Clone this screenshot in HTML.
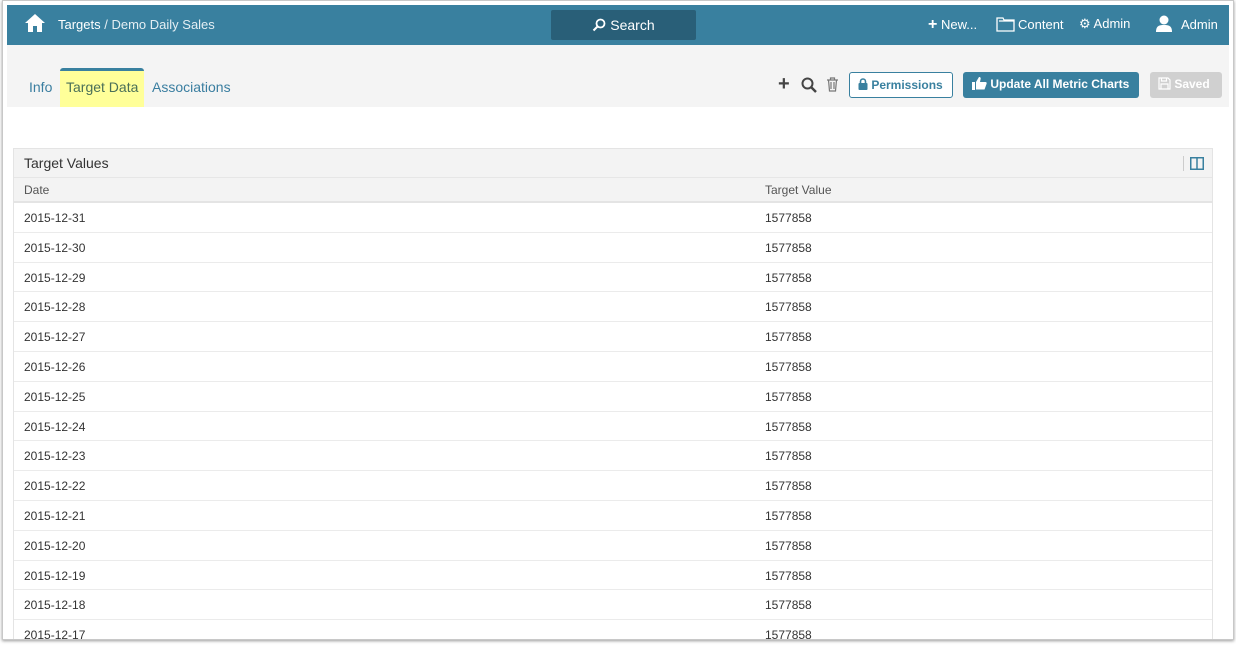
<!DOCTYPE html>
<html><head><style>
*{box-sizing:border-box;margin:0;padding:0}
body{width:1236px;height:646px;background:#fff;font-family:"Liberation Sans",sans-serif;position:relative;overflow:hidden}
.frame{position:absolute;left:2px;top:0px;width:1232px;height:640px;border:1px solid #c8c8c8;box-shadow:0 1px 3px rgba(0,0,0,.4);overflow:hidden;background:#fff}
.hdr{position:absolute;left:4px;top:4px;width:1222px;height:40px;background:#39809f;color:#fff;font-size:13px}
.hdr span{position:absolute;top:13px}
.search{position:absolute;left:544px;top:5px;width:145px;height:30px;background:#295f78;border-radius:2px;color:#fff;font-size:14px;text-align:center;line-height:30px}
.sub{position:absolute;left:4px;top:44px;width:1222px;height:62px;background:#f4f4f4}
.tab{position:absolute;top:78px;font-size:14px;color:#3a7ea0}
.btn{position:absolute;top:71px;height:26px;border-radius:3px;font-size:12px;font-weight:bold;line-height:24px}
.tbl{position:absolute;left:10px;top:147px;width:1200px;height:500px;border:1px solid #e4e4e4;border-bottom:none}
.th1{height:29px;background:#f3f3f3;border-bottom:1px solid #e6e6e6;font-size:14px;color:#333;padding:6px 10px}
.th2{height:25px;background:#f3f3f3;border-bottom:2px solid #e4e4e4;font-size:12px;color:#555;position:relative}
.row{height:29.8px;border-bottom:1px solid #ebebeb;font-size:12px;color:#333;position:relative}
.c1{position:absolute;left:10px;top:8px}.c2{position:absolute;left:751px;top:8px}
.th2 .c1,.th2 .c2{top:5px}
</style></head><body>
<div class="frame">
<div class="hdr">
<svg style="position:absolute;left:17px;top:8px" width="22" height="20" viewBox="0 0 22 20"><path d="M11 1L1 10h3v9h5v-6h4v6h5v-9h3z" fill="#fff"/></svg>
<span style="left:51px;top:12px">Targets <span style="position:static;color:#e4eef3">/ Demo Daily Sales</span></span>
<div class="search"><svg width="14" height="14" viewBox="0 0 14 14" style="vertical-align:-2px"><circle cx="8.5" cy="5.5" r="4" stroke="#fff" stroke-width="1.8" fill="none"/><path d="M5.5 8.5L1.5 12.5" stroke="#fff" stroke-width="2"/></svg> Search</div>
<span style="left:921px;top:12px"><b style="font-size:16px;line-height:10px">+</b> New...</span>
<svg style="position:absolute;left:989px;top:12px" width="19" height="15" viewBox="0 0 19 15"><path d="M1 1h6l1 2h10v11H1z M3 4h15" stroke="#fff" stroke-width="1.3" fill="none"/></svg>
<span style="left:1011px;top:12px">Content</span>
<span style="left:1072px;top:11px">⚙ Admin</span>
<svg style="position:absolute;left:1149px;top:10px" width="16" height="17" viewBox="0 0 16 17"><circle cx="8" cy="5" r="4.5" fill="#fff"/><path d="M0 17c0-6 3-7 8-7s8 1 8 7z" fill="#fff"/></svg>
<span style="left:1174px;top:12px">Admin</span>
</div>
<div class="sub"></div>
<div style="position:absolute;left:57px;top:67px;width:84px;height:39px;background:#ffff99;border-top:3px solid #39809f;border-radius:3px 3px 0 0"></div>
<div class="tab" style="left:26px">Info</div>
<div class="tab" style="left:63px;color:#4a6f58">Target Data</div>
<div class="tab" style="left:149px">Associations</div>
<div style="position:absolute;left:775px;top:74px;font-size:20px;font-weight:bold;color:#444;line-height:18px">+</div>
<svg style="position:absolute;left:798px;top:76px" width="16" height="16" viewBox="0 0 16 16"><circle cx="6.5" cy="6.5" r="5" stroke="#444" stroke-width="2" fill="none"/><path d="M10 10l5 5" stroke="#444" stroke-width="2.5"/></svg>
<svg style="position:absolute;left:823px;top:76px" width="13" height="15" viewBox="0 0 13 15"><path d="M1 3h11M4.5 3V1h4v2M2.5 3l1 11h6l1-11M5 5v7M8 5v7" stroke="#777" stroke-width="1.2" fill="none"/></svg>
<div class="btn" style="left:846px;width:104px;border:1px solid #39809f;color:#39809f;background:#fff;padding-left:8px"><svg width="10" height="12" viewBox="0 0 10 12" style="vertical-align:-1px"><path d="M2.5 5V3.5a2.5 2.5 0 0 1 5 0V5" stroke="#39809f" stroke-width="1.6" fill="none"/><rect x="0.5" y="5" width="9" height="7" rx="1" fill="#39809f"/></svg> Permissions</div>
<div class="btn" style="left:960px;width:176px;background:#39809f;color:#fff;padding-left:9px"><svg width="15" height="14" viewBox="0 0 15 14" style="vertical-align:-2px"><rect x="0" y="6" width="3" height="8" fill="#fff"/><path d="M4 6l3-5c1.5 0 2 1 1.5 2.5L8 6h5.5c1 0 1.5 1 1 2l-2 5.5H4z" fill="#fff"/></svg> Update All Metric Charts</div>
<div class="btn" style="left:1147px;width:72px;background:#d0d0d0;color:#fff;padding-left:8px"><svg width="13" height="13" viewBox="0 0 13 13" style="vertical-align:-2px"><path d="M1 1h9l2 2v9H1z M3.5 1v3h5V1 M3 7h7v5H3z" stroke="#fff" stroke-width="1.2" fill="none"/></svg> Saved</div>
<div class="tbl">
<div class="th1">Target Values
<span style="position:absolute;right:28px;top:7px;width:1px;height:15px;background:#ccc"></span>
<svg style="position:absolute;right:8px;top:8px" width="14" height="13" viewBox="0 0 14 13"><rect x=".75" y=".75" width="12.5" height="11.5" fill="none" stroke="#39809f" stroke-width="1.5"/><path d="M7 1v11" stroke="#39809f" stroke-width="1.5"/></svg></div>
<div class="th2"><span class="c1">Date</span><span class="c2">Target Value</span></div>
<div class="row"><span class="c1">2015-12-31</span><span class="c2">1577858</span></div>
<div class="row"><span class="c1">2015-12-30</span><span class="c2">1577858</span></div>
<div class="row"><span class="c1">2015-12-29</span><span class="c2">1577858</span></div>
<div class="row"><span class="c1">2015-12-28</span><span class="c2">1577858</span></div>
<div class="row"><span class="c1">2015-12-27</span><span class="c2">1577858</span></div>
<div class="row"><span class="c1">2015-12-26</span><span class="c2">1577858</span></div>
<div class="row"><span class="c1">2015-12-25</span><span class="c2">1577858</span></div>
<div class="row"><span class="c1">2015-12-24</span><span class="c2">1577858</span></div>
<div class="row"><span class="c1">2015-12-23</span><span class="c2">1577858</span></div>
<div class="row"><span class="c1">2015-12-22</span><span class="c2">1577858</span></div>
<div class="row"><span class="c1">2015-12-21</span><span class="c2">1577858</span></div>
<div class="row"><span class="c1">2015-12-20</span><span class="c2">1577858</span></div>
<div class="row"><span class="c1">2015-12-19</span><span class="c2">1577858</span></div>
<div class="row"><span class="c1">2015-12-18</span><span class="c2">1577858</span></div>
<div class="row"><span class="c1">2015-12-17</span><span class="c2">1577858</span></div>
</div>
</div>
</body></html>
